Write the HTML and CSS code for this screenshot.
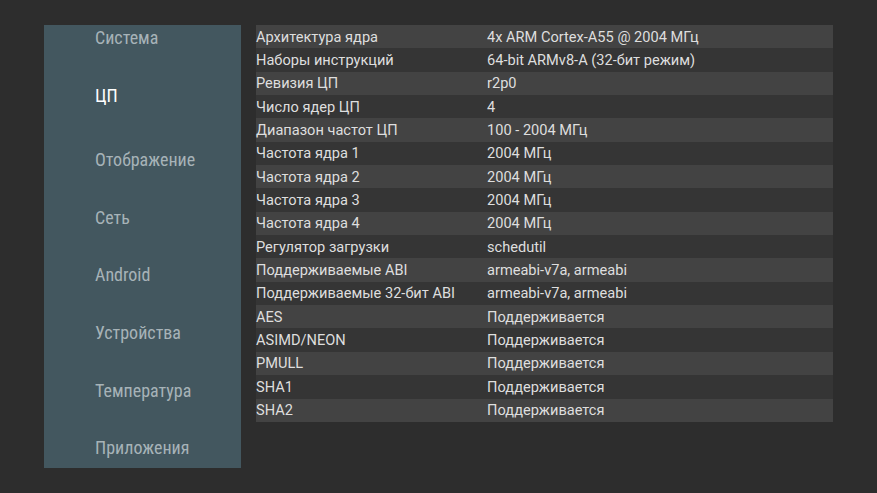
FILE: index.html
```html
<!DOCTYPE html>
<html lang="ru">
<head>
<meta charset="utf-8">
<link rel="stylesheet" href="styles.css">
</head>
<body>
<div class="screen">
  <nav class="menu">
    <div class="item first">Система</div>
    <div class="item active">ЦП</div>
    <div class="item">Отображение</div>
    <div class="item">Сеть</div>
    <div class="item">Android</div>
    <div class="item">Устройства</div>
    <div class="item">Температура</div>
    <div class="item">Приложения</div>
  </nav>
  <div class="table">
    <div class="row"><span class="k">Архитектура ядра</span><span class="v">4x ARM Cortex-A55 @ 2004 МГц</span></div>
    <div class="row"><span class="k">Наборы инструкций</span><span class="v">64-bit ARMv8-A (32-бит режим)</span></div>
    <div class="row"><span class="k">Ревизия ЦП</span><span class="v">r2p0</span></div>
    <div class="row"><span class="k">Число ядер ЦП</span><span class="v">4</span></div>
    <div class="row"><span class="k">Диапазон частот ЦП</span><span class="v">100 - 2004 МГц</span></div>
    <div class="row"><span class="k">Частота ядра 1</span><span class="v">2004 МГц</span></div>
    <div class="row"><span class="k">Частота ядра 2</span><span class="v">2004 МГц</span></div>
    <div class="row"><span class="k">Частота ядра 3</span><span class="v">2004 МГц</span></div>
    <div class="row"><span class="k">Частота ядра 4</span><span class="v">2004 МГц</span></div>
    <div class="row"><span class="k">Регулятор загрузки</span><span class="v">schedutil</span></div>
    <div class="row"><span class="k">Поддерживаемые ABI</span><span class="v">armeabi-v7a, armeabi</span></div>
    <div class="row"><span class="k">Поддерживаемые 32-бит ABI</span><span class="v">armeabi-v7a, armeabi</span></div>
    <div class="row"><span class="k">AES</span><span class="v">Поддерживается</span></div>
    <div class="row"><span class="k">ASIMD/NEON</span><span class="v">Поддерживается</span></div>
    <div class="row"><span class="k">PMULL</span><span class="v">Поддерживается</span></div>
    <div class="row"><span class="k">SHA1</span><span class="v">Поддерживается</span></div>
    <div class="row"><span class="k">SHA2</span><span class="v">Поддерживается</span></div>
  </div>
</div>
</body>
</html>
```

FILE: styles.css
```css
html, body {
  margin: 0;
  padding: 0;
  background: #2d2d2d;
}
.screen {
  width: 877px;
  height: 493px;
  display: flex;
  align-items: flex-start;
  padding: 25px 0 0 44px;
  box-sizing: border-box;
  gap: 15px;
}
.menu {
  width: 197px;
  height: 443px;
  background: #43575f;
  display: flex;
  flex-direction: column;
  padding-left: 51px;
  box-sizing: border-box;
  font-family: "Roboto Condensed", Roboto, sans-serif;
  font-stretch: condensed;
  font-size: 18px;
  color: #a7b3b8;
}
.item {
  height: 57.6px;
  line-height: 57.6px;
  flex: none;
}
.item.first {
  height: 26px;
  line-height: 26px;
}
.item.active {
  color: #ffffff;
  height: 70.2px;
  line-height: 70px;
  padding-top: 10px;
}
.table {
  width: 577px;
  display: flex;
  flex-direction: column;
  font-family: Roboto, sans-serif;
  font-size: 14.6px;
  color: #dedede;
}
.row {
  display: flex;
  height: 23.35px;
  align-items: center;
  background: #353535;
}
.row:nth-child(odd) {
  background: #434343;
}
.k {
  width: 231px;
  flex: none;
}
.v {
  flex: 1;
}
```
